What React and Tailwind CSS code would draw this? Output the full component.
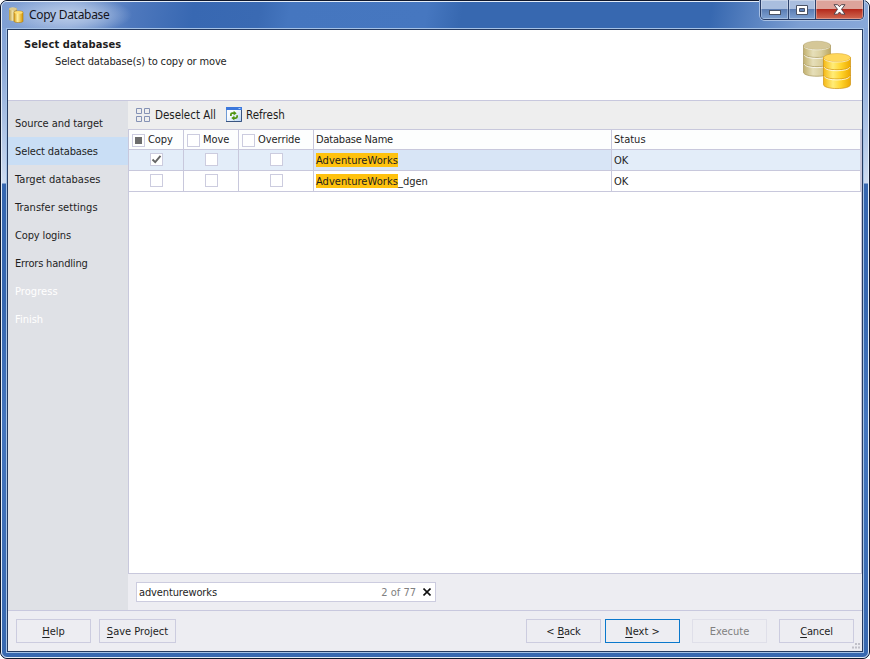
import React from "react";

const steps = [
  { label: "Source and target", cls: "text-[#1e1e1e] tracking-[-0.06px]" },
  { label: "Select databases", cls: "bg-[#c9def5] text-[#1e1e1e] tracking-[-0.12px]" },
  { label: "Target databases", cls: "text-[#1e1e1e] tracking-[0.06px]" },
  { label: "Transfer settings", cls: "text-[#1e1e1e] tracking-[0.02px]" },
  { label: "Copy logins", cls: "text-[#1e1e1e] tracking-[-0.14px]" },
  { label: "Errors handling", cls: "text-[#1e1e1e] tracking-[-0.18px]" },
  { label: "Progress", cls: "text-white tracking-[0.06px]" },
  { label: "Finish", cls: "text-white" },
];

function Check({ state, className = "" }) {
  return (
    <span className={`flex h-[13px] w-[13px] shrink-0 items-center justify-center border border-[#ccccdf] bg-white ${className}`}>
      {state === "mixed" && <span className="h-[7px] w-[7px] bg-[#6d6d6d]" />}
      {state === "on" && (
        <svg width="11" height="11" viewBox="0 0 11 11" fill="none" stroke="#666" strokeWidth="1.9">
          <path d="M1.5 5.5 4.2 8.2 9.5 1.8" />
        </svg>
      )}
    </span>
  );
}

function Cylinder({ x, y, id, top, edge }) {
  return (
    <g transform={`translate(${x} ${y})`}>
      <path d="M.5 4.5v27c0 5.4 27 5.4 27 0v-27z" fill={`url(#${id})`} stroke={edge} strokeWidth=".7" />
      <path d="M.5 13c0 5 27 5 27 0M.5 22.2c0 5 27 5 27 0" fill="none" stroke={edge} strokeOpacity=".7" strokeWidth="1" />
      <path d="M1.2 14.2c1 4.7 24.6 4.7 25.6 0M1.2 23.4c1 4.7 24.6 4.7 25.6 0" fill="none" stroke="#fff" strokeOpacity=".75" strokeWidth="1" />
      <ellipse cx="14" cy="4.7" rx="13.5" ry="4.2" fill={top} stroke={edge} strokeOpacity=".7" strokeWidth=".6" />
      <path d="M1 6c2 4.2 24 4.2 26 0" fill="none" stroke="#fff" strokeOpacity=".65" strokeWidth=".9" />
    </g>
  );
}

function DatabasesLogo() {
  return (
    <svg className="mr-[10px] mt-[10px]" width="50" height="50" viewBox="0 0 50 50">
      <defs>
        <linearGradient id="pale">
          <stop offset="0" stopColor="#c2b16f" />
          <stop offset=".35" stopColor="#e6dfb9" />
          <stop offset=".65" stopColor="#dacf9e" />
          <stop offset="1" stopColor="#bba763" />
        </linearGradient>
        <linearGradient id="gold">
          <stop offset="0" stopColor="#f5b916" />
          <stop offset=".35" stopColor="#ffec78" />
          <stop offset=".65" stopColor="#ffd42c" />
          <stop offset="1" stopColor="#eda900" />
        </linearGradient>
      </defs>
      <Cylinder x={1} y={0.7} id="pale" top="#d5c797" edge="#a8975c" />
      <Cylinder x={21} y={13} id="gold" top="#ffd85c" edge="#cf9212" />
    </svg>
  );
}

function AppIcon() {
  return (
    <svg width="16" height="16" viewBox="0 0 16 16">
      <defs>
        <linearGradient id="s1">
          <stop offset="0" stopColor="#b89a45" />
          <stop offset=".45" stopColor="#eee0a8" />
          <stop offset="1" stopColor="#a88d48" />
        </linearGradient>
        <linearGradient id="s2">
          <stop offset="0" stopColor="#d89b16" />
          <stop offset=".4" stopColor="#ffefa0" />
          <stop offset="1" stopColor="#d79500" />
        </linearGradient>
      </defs>
      <path d="M1 1.8c0-1.7 8-1.7 8 0v11c0 1.5-8 1.5-8 0z" fill="url(#s1)" />
      <ellipse cx="5" cy="2" rx="4" ry="1.3" fill="#ddc98c" />
      <path d="M6 5.3c0-1.7 9-1.7 9 0v9c0 1.7-9 1.7-9 0z" fill="url(#s2)" stroke="#b07c10" strokeWidth=".6" />
      <ellipse cx="10.5" cy="5.5" rx="4.2" ry="1.3" fill="#ffdf75" />
    </svg>
  );
}

function GridIcon() {
  return (
    <svg width="14" height="14" viewBox="0 0 14 14" fill="none" stroke="#8592b5">
      <path d="M.5.5h5v5h-5zM8.5.5h5v5h-5zM.5 8.5h5v5h-5zM8.5 8.5h5v5h-5z" />
    </svg>
  );
}

function RefreshIcon() {
  return (
    <svg className="mb-px" width="16" height="15" viewBox="0 0 16 15">
      <defs>
        <linearGradient id="page" x2="1" y2="1">
          <stop offset="0" stopColor="#ffffff" />
          <stop offset=".4" stopColor="#f8fbff" />
          <stop offset="1" stopColor="#b4d2f4" />
        </linearGradient>
      </defs>
      <path d="M.5.5h15v14H.5z" fill="url(#page)" stroke="#6f9bd6" />
      <path d="M15.5 2v12.5H0" fill="none" stroke="#3a5580" />
      <path d="M0 0h16v3H0z" fill="#3c78dc" />
      <path d="M12.5 1h2v1h-2z" fill="#a9d0ff" />
      <path d="M4.900 9V7.400q0-1.300 1.300-1.300h2" fill="none" stroke="#4f9410" strokeWidth="1.700" />
      <path d="M7.600 3.800 10.700 6.200 7.600 8.500z" fill="#4f9410" />
      <path d="M11.100 8.300v1.500q0 1.300-1.300 1.300h-2" fill="none" stroke="#4f9410" strokeWidth="1.700" />
      <path d="M8.400 8.700 5.300 11.100l3.100 2.300z" fill="#4f9410" />
    </svg>
  );
}

function HeadCell({ label, state }) {
  return (
    <div className="flex border-r border-b border-[#c8c8dc] pl-[3px] pt-1">
      <Check state={state} />
      <span className="ml-[3px] h-3 leading-[12px] tracking-[-0.05px]">{label}</span>
    </div>
  );
}

function CheckCell({ on }) {
  return (
    <div className="flex justify-center border-r border-b border-[#c8c8dc] pt-[3px]">
      <Check state={on ? "on" : ""} />
    </div>
  );
}

function Row({ on, suffix }) {
  return (
    <div className={`grid h-[21px] grid-cols-[55px_55px_75px_298px_249px] ${on ? "bg-[#e3edf9]" : "bg-white"}`}>
      <CheckCell on={on} />
      <CheckCell />
      <CheckCell />
      <div className={`flex border-r border-b border-[#c8c8dc] pl-0.5 pt-[3px] ${on ? "bg-[#d8e5f6]" : ""}`}>
        <span className="h-[14px] w-[82px] bg-[#ffc20e] leading-[15px] whitespace-nowrap tracking-[0.04px]">AdventureWorks</span>
        <span className="leading-[15px]">{suffix}</span>
      </div>
      <div className="border-r border-b border-[#c8c8dc] pl-0.5 pt-[3px] leading-[15px]">OK</div>
    </div>
  );
}

function Button({ pre = "", mark, rest, className = "w-[75px] border-[#ccccdf]" }) {
  return (
    <button className={`h-6 shrink-0 border pt-px text-center leading-[22px] whitespace-pre ${className}`}>
      {pre}
      {mark && <span className="underline underline-offset-2">{mark}</span>}
      {rest}
    </button>
  );
}

function WindowButtons() {
  return (
    <div className="flex h-5 w-[104px] shrink-0 overflow-hidden rounded-b-[5px] border border-t-0 border-[#263a63] shadow-[0_0_0_1px_#a9c1e4]">
      <div className="flex w-[28px] items-center justify-center border-r border-[#2c426c] bg-linear-to-b from-[#a9bede] from-45% via-[#5c7eb4] via-50% to-[#7fa2d2] shadow-[inset_0_0_0_1px_#ffffff50]">
        <svg width="12" height="6" className="mt-[6px]"><rect x=".5" y=".5" width="11" height="4" fill="#fff" stroke="#4a5365" /></svg>
      </div>
      <div className="flex w-[27px] items-center justify-center border-r border-[#2c426c] bg-linear-to-b from-[#a9bede] from-45% via-[#5c7eb4] via-50% to-[#7fa2d2] shadow-[inset_0_0_0_1px_#ffffff50]">
        <svg width="12" height="10">
          <path fillRule="evenodd" d="M.5.5h11v9H.5zM3.5 3.5v3h5v-3z" fill="#fff" stroke="#4a5365" />
        </svg>
      </div>
      <div className="flex flex-1 items-center justify-center bg-linear-to-b from-[#dda49b] from-45% via-[#b5291c] via-50% to-[#d06751] shadow-[inset_0_0_0_1px_#ffffff50]">
        <svg width="13" height="11" viewBox="0 0 13 11">
          <path d="M1 .7h3.6l1.900 2 1.900-2H12L8.500 5.300 12 10.200H8.400L6.500 8 4.600 10.200H1l3.500-4.900z" fill="#fff" stroke="#54454c" />
        </svg>
      </div>
    </div>
  );
}

export default function App() {
  return (
    <div className="h-[659px] w-[870px] overflow-hidden bg-white font-['DejaVu_Sans_Condensed','DejaVu_Sans',sans-serif] text-[11px] text-[#1e1e1e]">
      <div className="flex h-full flex-col rounded-[7px] border border-[#10182c] bg-[#3c6cb5] bg-[linear-gradient(#7d9fd5_0,#8aa8d8_60px,#cddbf0_182px,#3667b0_183px,#3667b0_300px,#4475be_420px,#3768b0_100%)]">
        <div className="flex grow flex-col rounded-[6px] border border-[#e4edf8] px-1 pb-1">
          <div className="-mx-1 flex h-[26px] shrink-0 justify-between rounded-t-[5px] bg-[linear-gradient(100deg,#7f9fd3_0,#86a4d6_70px,#4e78bd_130px,#3868b2_190px,#3a6ab3_255px,#4576bf_285px,#4677c0_420px,#3768b0_455px,#3768b0_700px,#7d9fd3_790px,#88a8d9_100%)] pr-1">
            <div className="flex h-[26px] w-[260px] items-center bg-[radial-gradient(ellipse_64px_19px_at_66px_13px,#c4d4ecdd_0,#b1c5e5bb_45%,#b1c5e500_100%)] pl-[6px]">
              <AppIcon />
              <span className="ml-[5px] font-['Noto_Sans','Open_Sans',sans-serif] text-[12px] leading-[24px] tracking-[-0.3px] text-[#15151c]">Copy Database</span>
            </div>
            <div className="-mt-0.5"><WindowButtons /></div>
          </div>

          <div className="flex grow flex-col border border-[#a5c2e6]">
            <div className="flex grow flex-col border border-[#253a60] bg-[#ededf2]">
              <header className="flex h-[71px] shrink-0 justify-between border-b border-[#c8c8de] bg-white">
                <div>
                  <h1 className="ml-4 mt-[7px] text-[11px] leading-[16px] font-bold tracking-[0.12px]">Select databases</h1>
                  <p className="mt-px ml-[47px] leading-[16px] tracking-[-0.14px]">Select database(s) to copy or move</p>
                </div>
                <DatabasesLogo />
              </header>

              <div className="flex h-[509px] shrink-0">
                <nav className="w-[120px] shrink-0 bg-[#dfe1e6] pt-2">
                  {steps.map((s) => (
                    <div key={s.label} className={`h-7 pl-[7px] leading-[30px] ${s.cls}`}>{s.label}</div>
                  ))}
                </nav>
                <main className="flex grow flex-col">
                  <div className="flex h-7 items-center bg-[#eeeeee] pl-2">
                    <GridIcon />
                    <span className="ml-[5px] w-[71px] pt-px text-[11.5px] leading-[17px] tracking-[-0.02px]">Deselect All</span>
                    <RefreshIcon />
                    <span className="ml-1 pt-px text-[11.5px] leading-[17px] tracking-[-0.02px]">Refresh</span>
                  </div>
                  <div className="h-[445px] w-[734px] border border-[#c8c8dc] bg-white">
                    <div className="grid h-5 grid-cols-[55px_55px_75px_298px_249px] grid-rows-[20px] bg-[#fdfefe]">
                      <HeadCell label="Copy" state="mixed" />
                      <HeadCell label="Move" />
                      <HeadCell label="Override" />
                      <div className="border-r border-b border-[#c8c8dc] pl-0.5 leading-[20px] tracking-[-0.2px]">Database Name</div>
                      <div className="border-r border-b border-[#c8c8dc] pl-0.5 leading-[20px]">Status</div>
                    </div>
                    <Row on />
                    <Row suffix="_dgen" />
                  </div>
                  <div className="flex grow items-center pl-2">
                    <div className="flex h-5 w-[300px] items-center justify-between border border-[#ccccdf] bg-white pr-1 pl-0.5">
                      <span className="pt-0.5 leading-[16px] tracking-[-0.13px]">adventureworks</span>
                      <span className="flex items-center gap-[7px] text-[#808080]">
                        <span className="pt-0.5 leading-[16px]">2 of 77</span>
                        <svg width="8" height="8" viewBox="0 0 8 8" stroke="#111" strokeWidth="1.6"><path d="M.5.5l7 7M7.5.5l-7 7" /></svg>
                      </span>
                    </div>
                  </div>
                </main>
              </div>

              <footer className="relative flex h-[41px] shrink-0 border-t border-[#c8c8de] pt-2 pl-2">
                <Button mark="H" rest="elp" className="w-[75px] border-[#ccccdf]" />
                <Button mark="S" rest="ave Project" className="ml-2 w-[77px] border-[#ccccdf]" />
                <Button pre="< " mark="B" rest="ack" className="ml-[350px] w-[75px] border-[#ccccdf] tracking-[-0.2px]" />
                <Button mark="N" rest="ext >" className="ml-1 w-[75px] border-[#0a78cc]" />
                <Button rest="Execute" className="ml-3 w-[75px] border-[#dfdfe9] text-[#808080]" />
                <Button mark="C" rest="ancel" className="ml-3 w-[75px] border-[#ccccdf] tracking-[-0.15px]" />
                <svg className="absolute right-0.5 bottom-0.5" width="8" height="6" fill="#c0c0c8">
                  <path d="M6 0h2v2H6zM3 0h2v2H3zM0 3.5h2v2H0zM3 3.5h2v2H3zM6 3.5h2v2H6z" />
                </svg>
              </footer>
            </div>
          </div>
        </div>
      </div>
    </div>
  );
}
